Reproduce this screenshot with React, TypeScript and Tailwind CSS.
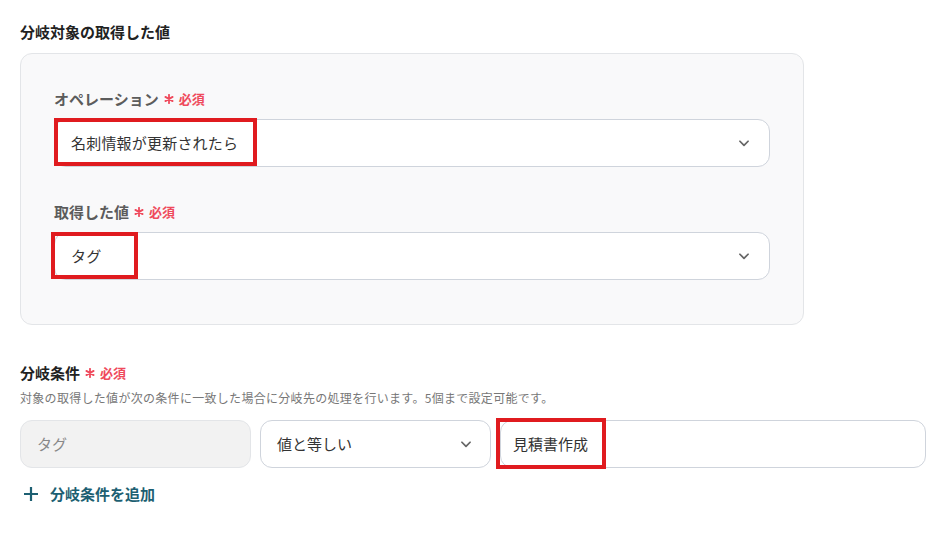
import React from 'react';

const font = { fontFamily: '"Noto Sans CJK JP", "Noto Sans", sans-serif' };

const Chevron: React.FC = () => (
  <svg width="14" height="14" viewBox="0 0 24 24" fill="none" stroke="#666" strokeWidth="3" strokeLinecap="round" strokeLinejoin="round">
    <path d="M5 9l7 7 7-7" />
  </svg>
);

const Required: React.FC = () => (
  <span className="ml-[5px] inline-flex items-center text-[13px] font-bold text-[#ef4a5c]">
    <svg className="mr-[5px]" width="10" height="10" viewBox="0 0 10 10" fill="none" stroke="#ef4a5c" strokeWidth="1.8" strokeLinecap="round">
      <path d="M5 0.8v8.4M1.4 2.9l7.2 4.2M8.6 2.9l-7.2 4.2" />
    </svg>
    必須
  </span>
);

const Mark: React.FC<{ className: string }> = ({ className }) => (
  <div className={`pointer-events-none absolute border-[4px] border-[#e01b1f] ${className}`} />
);

const SelectBox: React.FC<{ value: string; markClass: string }> = ({ value, markClass }) => (
  <div className="relative">
    <div className="flex h-[48px] items-center justify-between rounded-[12px] border border-[#cfd4dc] bg-white pl-[16px] pr-[18px] text-[15px] tracking-[0.2px] text-[#333]">
      <span>{value}</span>
      <Chevron />
    </div>
    <Mark className={markClass} />
  </div>
);

export default function App() {
  return (
    <div className="min-h-screen bg-white px-[20px] pt-[21px]" style={font}>
      <h2 className="text-[15px] font-bold leading-[22px] text-[#222]">分岐対象の取得した値</h2>

      <div className="mt-[10px] w-[784px] rounded-[12px] border border-[#e3e5e8] bg-[#f9f9fa] px-[33px] pb-[44px] pt-[35px]">
        <div className="flex h-[20px] items-center text-[15px] font-bold text-[#5c5c5c]">
          オペレーション<Required />
        </div>
        <div className="mt-[10px]">
          <SelectBox value="名刺情報が更新されたら" markClass="left-0 top-[-1px] h-[48px] w-[203px]" />
        </div>

        <div className="mt-[35px] flex h-[20px] items-center text-[15px] font-bold text-[#5c5c5c]">
          取得した値<Required />
        </div>
        <div className="mt-[10px]">
          <SelectBox value="タグ" markClass="left-[-3px] top-0 h-[47px] w-[87px]" />
        </div>
      </div>

      <div className="mt-[37px] flex h-[22px] items-center text-[15px] font-bold text-[#222]">
        分岐条件<Required />
      </div>
      <p className="mt-[6px] text-[12px] leading-[16px] tracking-[0.3px] text-[#777]">
        対象の取得した値が次の条件に一致した場合に分岐先の処理を行います。5個まで設定可能です。
      </p>

      <div className="mt-[14px] flex w-[906px] gap-[9px]">
        <div className="flex h-[48px] w-[231px] items-center rounded-[12px] border border-[#e3e5e8] bg-[#f2f2f2] pl-[16px] text-[15px] text-[#888]">
          タグ
        </div>
        <div className="flex h-[48px] w-[231px] items-center justify-between rounded-[12px] border border-[#cfd4dc] bg-white pl-[16px] pr-[17px] text-[15px] text-[#333]">
          <span>値と等しい</span>
          <Chevron />
        </div>
        <div className="relative flex-1">
          <div className="flex h-[48px] items-center rounded-[12px] border border-[#cfd4dc] bg-white pl-[12px] text-[15px] text-[#333]">
            見積書作成
          </div>
          <Mark className="left-[-4px] top-[-2px] h-[51px] w-[110px]" />
        </div>
      </div>

      <button className="mt-[16px] flex h-[20px] items-center gap-[12px] pl-[4px] text-[15px] font-bold text-[#1d5f72]">
        <svg width="14" height="14" viewBox="0 0 14 14" fill="none" stroke="#1d5f72" strokeWidth="2.2">
          <path d="M7 0v14M0 7h14" />
        </svg>
        分岐条件を追加
      </button>
    </div>
  );
}
